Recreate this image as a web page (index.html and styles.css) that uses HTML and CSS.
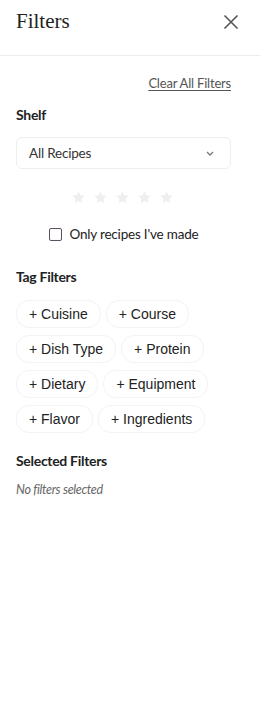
FILE: index.html
```html
<!DOCTYPE html>
<html lang="en">
<head>
<meta charset="utf-8">
<title>Filters</title>
<link rel="stylesheet" href="styles.css">
</head>
<body>
<div class="panel">
  <header class="header">
    <h1 class="title">Filters</h1>
    <button class="close" aria-label="Close">
      <svg width="16" height="16" viewBox="0 0 16 16"><path d="M1.5 1.5 L14.5 14.5 M14.5 1.5 L1.5 14.5" stroke="#555" stroke-width="1.6" fill="none"/></svg>
    </button>
  </header>
  <div class="content">
    <div class="clear-row"><a class="clear" href="#">Clear All Filters</a></div>
    <h2 class="section">Shelf</h2>
    <div class="select">
      <span>All Recipes</span>
      <svg class="chev" width="8" height="5" viewBox="0 0 8 5"><path d="M1 1 L4 4 L7 1" stroke="#777" stroke-width="1.3" fill="none"/></svg>
    </div>
    <div class="stars">
      <svg viewBox="0 0 24 24" width="15" height="15"><path d="M12 2l3 6.5 7 .8-5.2 4.8 1.4 7L12 17.6 5.8 21.1l1.4-7L2 9.3l7-.8z" fill="#efefef"/></svg>
      <svg viewBox="0 0 24 24" width="15" height="15"><path d="M12 2l3 6.5 7 .8-5.2 4.8 1.4 7L12 17.6 5.8 21.1l1.4-7L2 9.3l7-.8z" fill="#efefef"/></svg>
      <svg viewBox="0 0 24 24" width="15" height="15"><path d="M12 2l3 6.5 7 .8-5.2 4.8 1.4 7L12 17.6 5.8 21.1l1.4-7L2 9.3l7-.8z" fill="#efefef"/></svg>
      <svg viewBox="0 0 24 24" width="15" height="15"><path d="M12 2l3 6.5 7 .8-5.2 4.8 1.4 7L12 17.6 5.8 21.1l1.4-7L2 9.3l7-.8z" fill="#efefef"/></svg>
      <svg viewBox="0 0 24 24" width="15" height="15"><path d="M12 2l3 6.5 7 .8-5.2 4.8 1.4 7L12 17.6 5.8 21.1l1.4-7L2 9.3l7-.8z" fill="#efefef"/></svg>
    </div>
    <label class="check">
      <span class="box"></span>
      <span>Only recipes I've made</span>
    </label>
    <h2 class="section">Tag Filters</h2>
    <div class="tags">
      <button class="tag">+ Cuisine</button>
      <button class="tag">+ Course</button>
      <button class="tag">+ Dish Type</button>
      <button class="tag">+ Protein</button>
      <button class="tag">+ Dietary</button>
      <button class="tag">+ Equipment</button>
      <button class="tag">+ Flavor</button>
      <button class="tag">+ Ingredients</button>
    </div>
    <h2 class="section selected">Selected Filters</h2>
    <p class="none">No filters selected</p>
  </div>
</div>
</body>
</html>
```

FILE: styles.css
```css
* { box-sizing: border-box; }
html, body { margin: 0; padding: 0; background: #fff; }
body { font-family: Lato, "Open Sans", sans-serif; color: #222; }
.panel { width: 260px; }
.header {
  height: 56px;
  border-bottom: 1px solid #ececec;
  display: flex;
  align-items: center;
  justify-content: space-between;
  padding: 0 21px 0 16px;
}
.title {
  margin: 0;
  font-family: "Liberation Serif", serif;
  font-weight: normal;
  font-size: 21px;
  color: #222;
  position: relative;
  top: -6px;
}
.close {
  border: 0; background: none; padding: 0; width: 16px; height: 16px;
  position: relative; top: -6px;
}
.close svg { display: block; }
.content { padding: 18px 29px 0 16px; }
.clear-row { display: flex; justify-content: flex-end; }
.clear {
  font-size: 13px; color: #555; text-decoration: underline;
  text-underline-offset: 2px; line-height: 18px; letter-spacing: -0.2px;
}
.section {
  margin: 0; font-size: 14px; font-weight: bold; color: #222;
  line-height: 18px; letter-spacing: -0.3px;
}
.clear-row + .section { margin-top: 14px; }
.select {
  margin-top: 13px;
  height: 32px;
  border: 1px solid #eeeeee;
  border-radius: 6px;
  display: flex; align-items: center; justify-content: space-between;
  padding: 0 16px 0 12px;
  font-size: 13.5px; color: #333; letter-spacing: -0.2px;
}
.chev { display: block; }
.stars {
  display: flex; justify-content: center; gap: 7px;
  margin-top: 21px; padding-right: 3px;
}
.stars svg { display: block; }
.check {
  display: flex; align-items: center; justify-content: center; gap: 8px;
  margin-top: 21px; font-size: 13.5px; color: #222; letter-spacing: -0.2px;
}
.box {
  width: 13px; height: 13px; border: 1px solid #5a5060; border-radius: 2px;
  display: block;
}
.check + .section { margin-top: 26px; }
.tags {
  display: flex; flex-wrap: wrap; column-gap: 5px; row-gap: 7px;
  margin-top: 14px; width: 200px;
}
.tag {
  font-family: "Liberation Sans", Arial, sans-serif;
  font-size: 14px; color: #222;
  height: 28px; padding: 0 12px;
  background: #fff;
  border: 1px solid #f3f3f3;
  border-radius: 13px;
}
.selected { margin-top: 19px; }
.none {
  margin: 12px 0 0 0; font-size: 12.5px; font-style: italic; color: #666;
  letter-spacing: -0.3px;
}
```
